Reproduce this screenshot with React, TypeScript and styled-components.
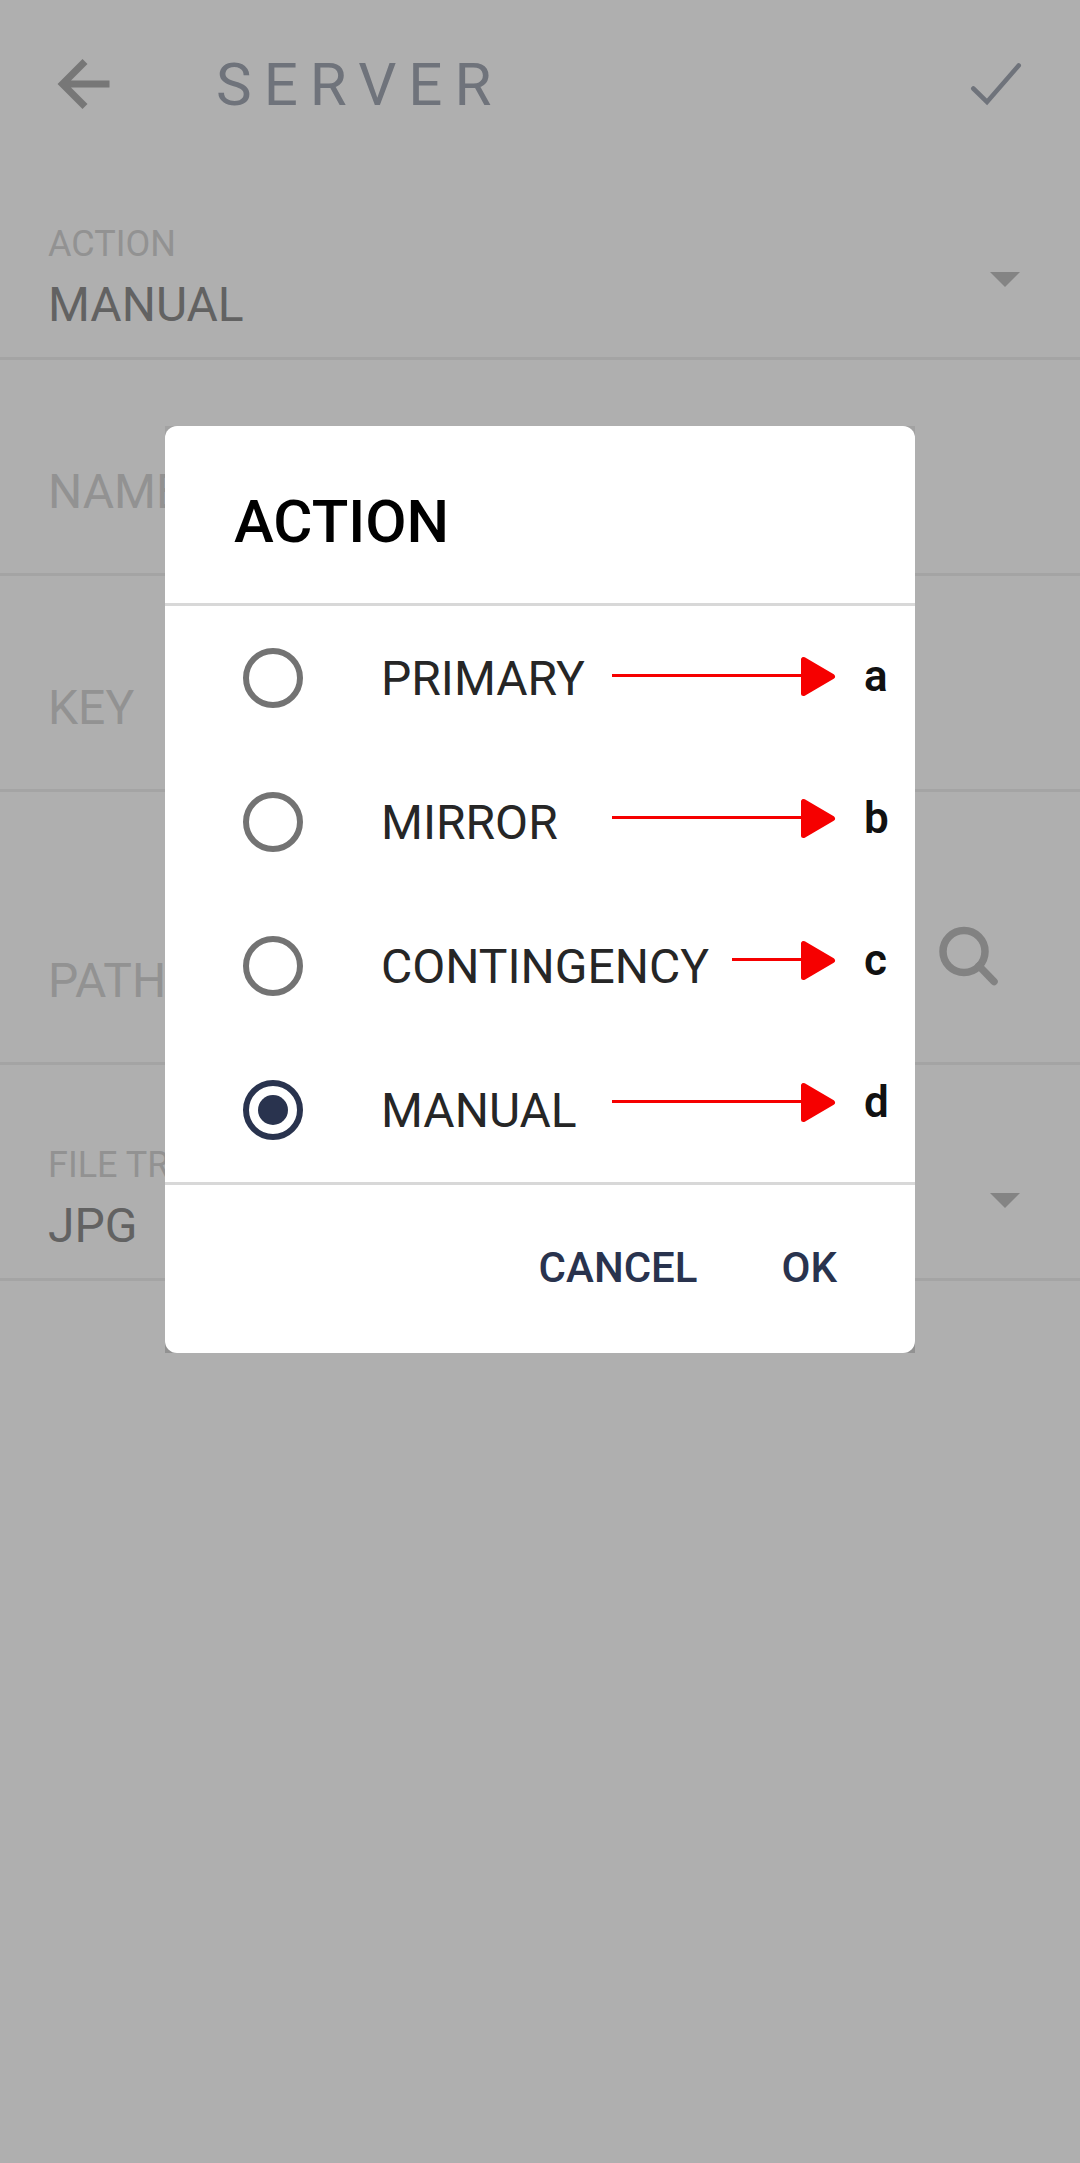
import React, { useState } from "react";
import styled, { createGlobalStyle } from "styled-components";

const GlobalStyle = createGlobalStyle`
  *, *::before, *::after { box-sizing: border-box; }
  body {
    margin: 0;
    background: #afafaf;
    font-family: Roboto, "Liberation Sans", sans-serif;
  }
  button, input, select { font: inherit; }
`;

const Screen = styled.div`
  min-height: 100vh;
  background: #afafaf;
`;

const Header = styled.header`
  display: flex;
  align-items: center;
  height: 144px;
  padding: 24px 48px 0 48px;
`;

const IconButton = styled.button`
  display: flex;
  align-items: center;
  justify-content: center;
  flex: none;
  width: 72px;
  height: 72px;
  padding: 0;
  border: 0;
  background: none;
  color: ${(p) => p.color};
`;

const PageTitle = styled.h1`
  flex: 1;
  margin: 0;
  padding: 2px 0 0 96px;
  font-size: 60px;
  line-height: 72px;
  font-weight: 400;
  letter-spacing: 12px;
  color: #6f737b;
`;

const Row = styled.div<{ $tall?: boolean }>`
  position: relative;
  display: flex;
  align-items: flex-end;
  height: ${(p) => (p.$tall ? 273 : 216)}px;
  padding: 0 48px;
  border-bottom: 3px solid #a4a4a4;
`;

const SelectGroup = styled.div`
  display: flex;
  flex-direction: column;
  flex: 1;
  padding-bottom: 22px;
`;

const FieldLabel = styled.label`
  font-size: 36px;
  line-height: 62px;
  color: #929292;
`;

const FieldSelect = styled.select`
  appearance: none;
  width: 100%;
  height: 60px;
  padding: 0;
  border: 0;
  background: none;
  font-size: 48px;
  line-height: 60px;
  color: #626262;
`;

const Caret = styled.svg`
  flex: none;
  width: 30px;
  height: 15px;
  margin: 0 12px 70px 0;
  fill: #848484;
`;

const FieldInput = styled.input`
  flex: 1;
  min-width: 0;
  height: 60px;
  margin-bottom: 51px;
  padding: 0;
  border: 0;
  background: none;
  font-size: 48px;
  line-height: 60px;
  color: #626262;

  &::placeholder {
    color: #929292;
    opacity: 1;
  }
`;

const SearchButton = styled(IconButton)`
  margin: 0 27px 70px 0;
`;

const Scrim = styled.div`
  position: fixed;
  inset: 0;
  display: flex;
  align-items: flex-start;
  justify-content: center;
  padding: 426px 48px 48px;
`;

const DialogFrame = styled.div`
  width: 100%;
  max-width: 750px;
  background: linear-gradient(#a2a2a2, #929292);
`;

const Dialog = styled.form`
  border-radius: 12px;
  background: #fff;
`;

const DialogTitle = styled.h2`
  margin: 0;
  padding: 60px 69px 45px;
  font-size: 60px;
  line-height: 72px;
  font-weight: 500;
  color: #000;
`;

const Options = styled.div`
  position: relative;
  border-top: 3px solid #d8d8d8;
  border-bottom: 3px solid #d8d8d8;
`;

const Option = styled.label`
  display: flex;
  align-items: center;
  gap: 78px;
  height: 144px;
  padding-left: 78px;
  font-size: 48px;
  line-height: 60px;
  color: #262626;
`;

const OptionName = styled.span`
  padding-top: 2px;
`;

const Radio = styled.input`
  appearance: none;
  display: grid;
  place-items: center;
  flex: none;
  width: 60px;
  height: 60px;
  margin: 0;
  border: 6px solid #737373;
  border-radius: 50%;

  &:checked {
    border-color: #29334e;
  }

  &:checked::before {
    content: "";
    width: 30px;
    height: 30px;
    border-radius: 50%;
    background: #29334e;
  }
`;

const Callouts = styled.div`
  position: absolute;
  top: 0;
  right: 0;
  pointer-events: none;
`;

const Callout = styled.div`
  display: flex;
  align-items: center;
  justify-content: flex-end;
  gap: 28px;
  height: 142px;
`;

const CalloutLetter = styled.span`
  width: 51px;
  padding-bottom: 2px;
  font-size: 44px;
  line-height: 60px;
  font-weight: 600;
  color: #111;
`;

const Actions = styled.div`
  display: flex;
  justify-content: flex-end;
  gap: 36px;
  padding: 24px 54px 27px;
`;

const TextButton = styled.button`
  height: 117px;
  padding: 0 24px;
  border: 0;
  background: none;
  font-size: 42px;
  line-height: 48px;
  font-weight: 500;
  color: #29334e;
`;

const BackIcon = () => (
  <svg width="72" height="72" viewBox="0 0 72 72" fill="none" stroke="currentColor" strokeWidth="7">
    <path d="M61.5 36H15M37 13.5L14.500 36L37 58.500" />
  </svg>
);

const CheckIcon = () => (
  <svg
    width="72"
    height="72"
    viewBox="0 0 72 72"
    fill="none"
    stroke="currentColor"
    strokeWidth="4.600"
    strokeLinecap="round"
  >
    <path d="M13.300 40.500L27 54L58.700 17.500" />
  </svg>
);

const SearchIcon = () => (
  <svg width="72" height="72" viewBox="0 0 72 72" fill="none" stroke="currentColor">
    <circle cx="31" cy="31.500" r="21" strokeWidth="7.500" />
    <path d="M46 46L61 61.500" strokeWidth="7.500" strokeLinecap="round" />
  </svg>
);

const ArrowIcon = ({ length }: { length: number }) => (
  <svg width={length} height="42" viewBox={`0 0 ${length} 42`}>
    <path d={`M0 19.500H${length - 30}`} stroke="#f60000" strokeWidth="3" />
    <path
      d={`M${length - 32.500} 3.500V37.500L${length - 3.500} 20.500Z`}
      fill="#f60000"
      stroke="#f60000"
      strokeWidth="5"
      strokeLinejoin="round"
    />
  </svg>
);

type SelectFieldProps = { id: string; label: string; value: string };

const SelectField = ({ id, label, value }: SelectFieldProps) => (
  <Row>
    <SelectGroup>
      <FieldLabel htmlFor={id}>{label}</FieldLabel>
      <FieldSelect id={id} defaultValue={value}>
        <option>{value}</option>
      </FieldSelect>
    </SelectGroup>
    <Caret viewBox="0 0 30 15" aria-hidden="true">
      <path d="M0 0H30L15 15Z" />
    </Caret>
  </Row>
);

const options = [
  { name: "PRIMARY", letter: "a", arrow: 224 },
  { name: "MIRROR", letter: "b", arrow: 224 },
  { name: "CONTINGENCY", letter: "c", arrow: 104 },
  { name: "MANUAL", letter: "d", arrow: 224 },
];

export default function App() {
  const [action, setAction] = useState("MANUAL");

  return (
    <>
      <GlobalStyle />
      <Screen>
        <Header>
          <IconButton type="button" aria-label="Back" color="#777777">
            <BackIcon />
          </IconButton>
          <PageTitle>SERVER</PageTitle>
          <IconButton type="button" aria-label="Save" color="#6f737b">
            <CheckIcon />
          </IconButton>
        </Header>
        <main>
          <SelectField id="action" label="ACTION" value="MANUAL" />
          <Row>
            <FieldInput aria-label="Name" placeholder="NAME" />
          </Row>
          <Row>
            <FieldInput aria-label="Key" placeholder="KEY" />
          </Row>
          <Row $tall>
            <FieldInput aria-label="Path" placeholder="PATH" />
            <SearchButton type="button" aria-label="Browse" color="#828282">
              <SearchIcon />
            </SearchButton>
          </Row>
          <SelectField id="file-transfer" label="FILE TRANSFER" value="JPG" />
        </main>
      </Screen>
      <Scrim>
        <DialogFrame role="dialog" aria-modal="true" aria-labelledby="dialog-title">
          <Dialog onSubmit={(e) => e.preventDefault()}>
            <DialogTitle id="dialog-title">ACTION</DialogTitle>
            <Options>
              {options.map((o) => (
                <Option key={o.name}>
                  <Radio
                    type="radio"
                    name="action"
                    checked={action === o.name}
                    onChange={() => setAction(o.name)}
                  />
                  <OptionName>{o.name}</OptionName>
                </Option>
              ))}
              <Callouts>
                {options.map((o) => (
                  <Callout key={o.letter}>
                    <ArrowIcon length={o.arrow} />
                    <CalloutLetter>{o.letter}</CalloutLetter>
                  </Callout>
                ))}
              </Callouts>
            </Options>
            <Actions>
              <TextButton type="button">CANCEL</TextButton>
              <TextButton type="submit">OK</TextButton>
            </Actions>
          </Dialog>
        </DialogFrame>
      </Scrim>
    </>
  );
}
